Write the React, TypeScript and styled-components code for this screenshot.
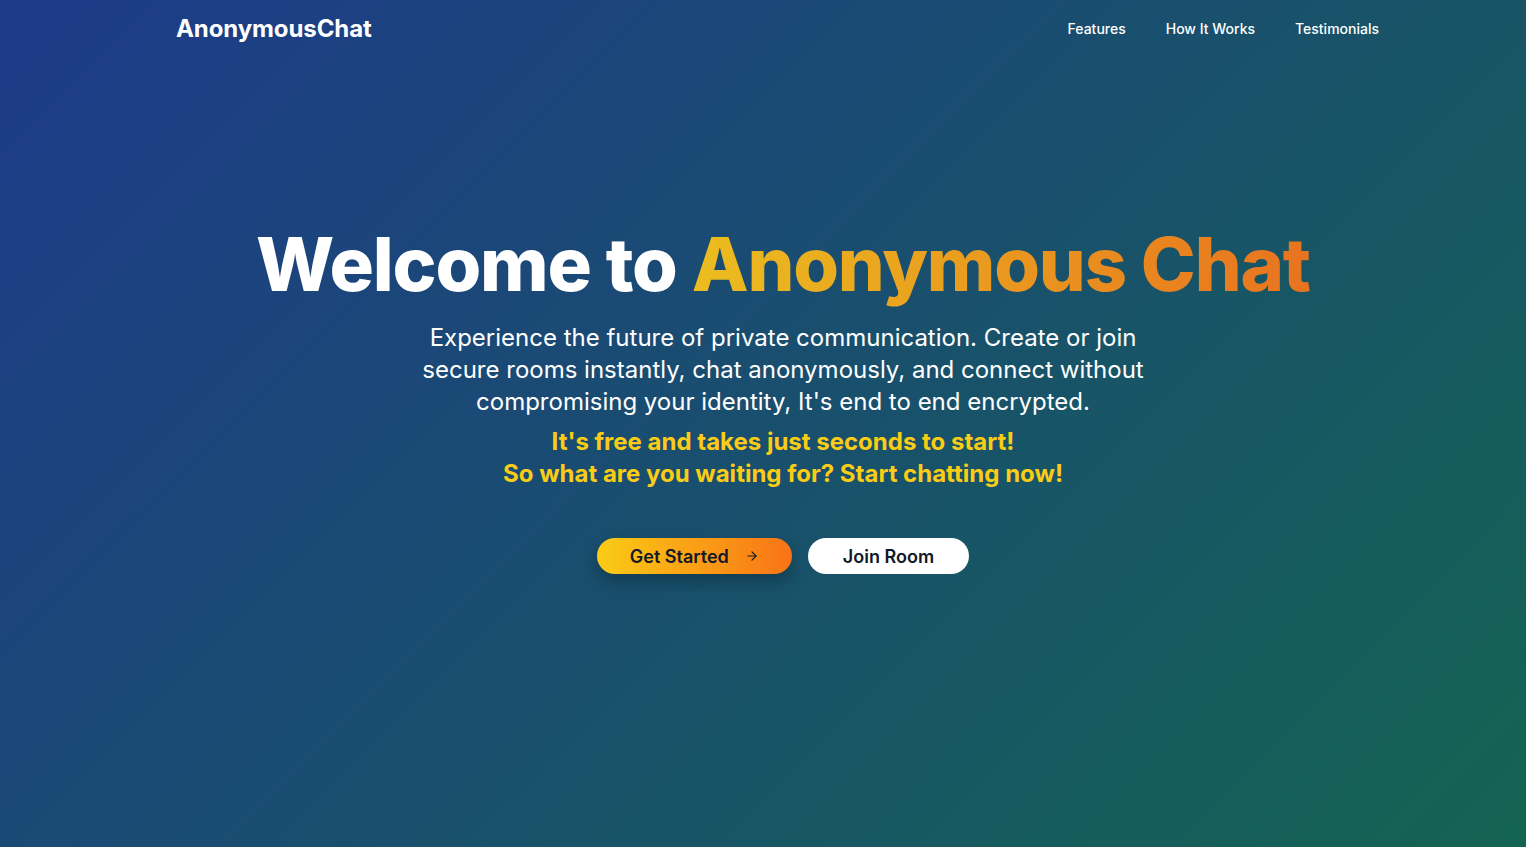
import React from "react";
import styled, { createGlobalStyle } from "styled-components";

const Global = createGlobalStyle`
  html, body { margin: 0; padding: 0; }
  body { font-family: Inter, "Noto Sans", sans-serif; -webkit-font-smoothing: antialiased; }
  * { box-sizing: border-box; }
`;

const Page = styled.div`
  min-height: 847px;
  width: 100%;
  background: linear-gradient(135deg, #1e3a8a 0%, #146452 100%);
  color: #fff;
  display: flex;
  flex-direction: column;
`;

const Nav = styled.header`
  display: flex;
  align-items: center;
  justify-content: space-between;
  height: 57px;
  padding: 0 147px 0 176px;
`;

const Logo = styled.div`
  font-size: 24px;
  font-weight: 700;
  letter-spacing: -0.1px;
`;

const Links = styled.nav`
  display: flex;
  gap: 40px;
`;

const NavLink = styled.a`
  font-size: 14px;
  font-weight: 500;
  color: #fff;
  text-decoration: none;
`;

const Hero = styled.main`
  display: flex;
  flex-direction: column;
  align-items: center;
  text-align: center;
  padding: 159px 0 0 40px;
`;

const Title = styled.h1`
  margin: 0;
  font-size: 74px;
  line-height: 96px;
  font-weight: 800;
  letter-spacing: -1.2px;
  white-space: nowrap;
`;

const Accent = styled.span`
  background: linear-gradient(to right, #ebbd1f, #e8731f);
  -webkit-background-clip: text;
  background-clip: text;
  color: transparent;
`;

const Lead = styled.p`
  margin: 10px 0 0;
  max-width: 768px;
  font-size: 24px;
  line-height: 32px;
  font-weight: 400;
`;

const Callout = styled.p`
  margin: 8px 0 0;
  font-size: 24px;
  line-height: 32px;
  font-weight: 700;
  color: #facc15;
`;

const Actions = styled.div`
  display: flex;
  gap: 16px;
  margin-top: 48px;
`;

const Button = styled.button<{ $primary?: boolean }>`
  height: 36px;
  border: none;
  border-radius: 9999px;
  font-family: inherit;
  font-size: 18px;
  font-weight: 600;
  color: #111827;
  display: flex;
  align-items: center;
  gap: 16px;
  cursor: pointer;
  padding: ${(p) => (p.$primary ? "0 33px" : "0 35px")};
  background: ${(p) => (p.$primary ? "linear-gradient(to right, #facc15, #f97316)" : "#fff")};
  box-shadow: ${(p) => (p.$primary ? "0 8px 16px rgba(0,0,0,0.25)" : "none")};
`;

const Arrow = () => (
  <svg width="14" height="14" viewBox="0 0 24 24" fill="none" stroke="currentColor" strokeWidth="2" strokeLinecap="round" strokeLinejoin="round">
    <path d="M5 12h14" />
    <path d="M12 5l7 7-7 7" />
  </svg>
);

export default function App() {
  return (
    <>
      <Global />
      <Page>
        <Nav>
          <Logo>AnonymousChat</Logo>
          <Links>
            <NavLink href="#">Features</NavLink>
            <NavLink href="#">How It Works</NavLink>
            <NavLink href="#">Testimonials</NavLink>
          </Links>
        </Nav>
        <Hero>
          <Title>
            Welcome to <Accent>Anonymous Chat</Accent>
          </Title>
          <Lead>
            Experience the future of private communication. Create or join secure rooms instantly, chat anonymously, and connect without compromising your identity, It's end to end encrypted.
          </Lead>
          <Callout>
            It's free and takes just seconds to start!
            <br />
            So what are you waiting for? Start chatting now!
          </Callout>
          <Actions>
            <Button $primary>
              Get Started <Arrow />
            </Button>
            <Button>Join Room</Button>
          </Actions>
        </Hero>
      </Page>
    </>
  );
}
